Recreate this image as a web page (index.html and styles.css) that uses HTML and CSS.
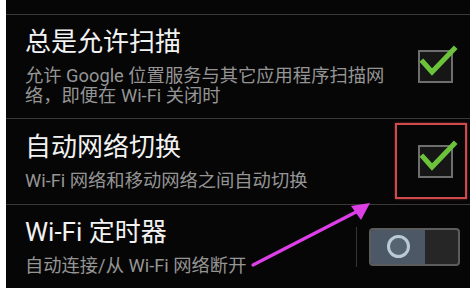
FILE: index.html
```html
<!DOCTYPE html>
<html lang="zh-CN">
<head>
<meta charset="utf-8">
<link rel="stylesheet" href="styles.css">
</head>
<body>
<div class="screen">
  <div class="panel">
    <div class="stub"></div>
    <div class="row row-1">
      <div class="text">
        <div class="title">总是允许扫描</div>
        <div class="sub">允许 Google 位置服务与其它应用程序扫描网<br>络，即便在 Wi-Fi 关闭时</div>
      </div>
      <div class="check"><svg class="tick" viewBox="0 0 44 44" width="44" height="44"><path d="M5 22 L14 32 L36 9" fill="none" stroke="#6cc23a" stroke-width="5" stroke-linecap="square" stroke-linejoin="miter"/></svg></div>
    </div>
    <div class="row row-2">
      <div class="text">
        <div class="title">自动网络切换</div>
        <div class="sub">Wi-Fi 网络和移动网络之间自动切换</div>
      </div>
      <div class="check"><svg class="tick" viewBox="0 0 44 44" width="44" height="44"><path d="M5 22 L14 32 L36 9" fill="none" stroke="#6cc23a" stroke-width="5" stroke-linecap="square" stroke-linejoin="miter"/></svg></div>
      <div class="highlight"></div>
    </div>
    <div class="row row-3">
      <div class="text">
        <div class="title">Wi-Fi 定时器</div>
        <div class="sub">自动连接/从 Wi-Fi 网络断开</div>
      </div>
      <div class="vdiv"></div>
      <div class="toggle">
        <div class="toggle-on"><span class="knob"></span></div>
      </div>
    </div>
  </div>
  <svg class="arrow" viewBox="0 0 470 288" width="470" height="288">
    <line x1="253" y1="265" x2="358" y2="211" stroke="#dd3fe6" stroke-width="3.2" stroke-linecap="round"/>
    <polygon points="370,203 351,206 361,220" fill="#dd3fe6"/>
  </svg>
</div>
</body>
</html>
```
FILE: styles.css
```css
* { box-sizing: border-box; }
html, body {
  margin: 0;
  padding: 0;
  background: #ffffff;
}
.screen {
  position: relative;
  width: 470px;
  height: 288px;
  overflow: hidden;
}
.panel {
  margin-left: 6px;
  height: 288px;
  background: #060606;
  font-family: Roboto, "Noto Sans CJK SC", sans-serif;
  display: flex;
  flex-direction: column;
}
.stub {
  height: 14px;
}
.row {
  position: relative;
  display: flex;
  align-items: center;
  border-top: 1px solid #383838;
  padding-left: 19px;
}
.row-1 { height: 104px; padding-right: 17px; }
.row-2 { height: 86px; padding-right: 17px; }
.row-3 { flex: 1; padding-right: 10px; }
.text {
  flex: 1;
  min-width: 0;
}
.title {
  font-size: 26px;
  line-height: 30px;
  color: #f2f2f2;
}
.sub {
  margin-top: 9px;
  font-size: 18.3px;
  line-height: 20px;
  color: #959595;
  white-space: nowrap;
}
.check {
  position: relative;
  width: 35px;
  height: 33px;
  border: 2px solid #6e6e6e;
  background: #161616;
}
.tick {
  position: absolute;
  left: -2px;
  top: -12px;
}
.highlight {
  position: absolute;
  left: 389px;
  top: 4px;
  width: 72px;
  height: 76px;
  border: 2px solid #cf4a4a;
  box-shadow: 0 0 2px rgba(220, 80, 80, 0.6);
}
.vdiv {
  width: 1px;
  height: 40px;
  background: #353535;
  margin-right: 12px;
}
.toggle {
  width: 91px;
  height: 38px;
  border: 2px solid #5c5c5c;
  border-radius: 4px;
  background: #262626;
  overflow: hidden;
  display: flex;
}
.toggle-on {
  width: 54px;
  height: 100%;
  background: #4c5865;
  display: flex;
  align-items: center;
  justify-content: center;
}
.knob {
  width: 23px;
  height: 23px;
  border-radius: 50%;
  border: 3px solid #b9cad6;
  background: #566472;
}
.arrow {
  position: absolute;
  left: 0;
  top: 0;
  pointer-events: none;
}
```
